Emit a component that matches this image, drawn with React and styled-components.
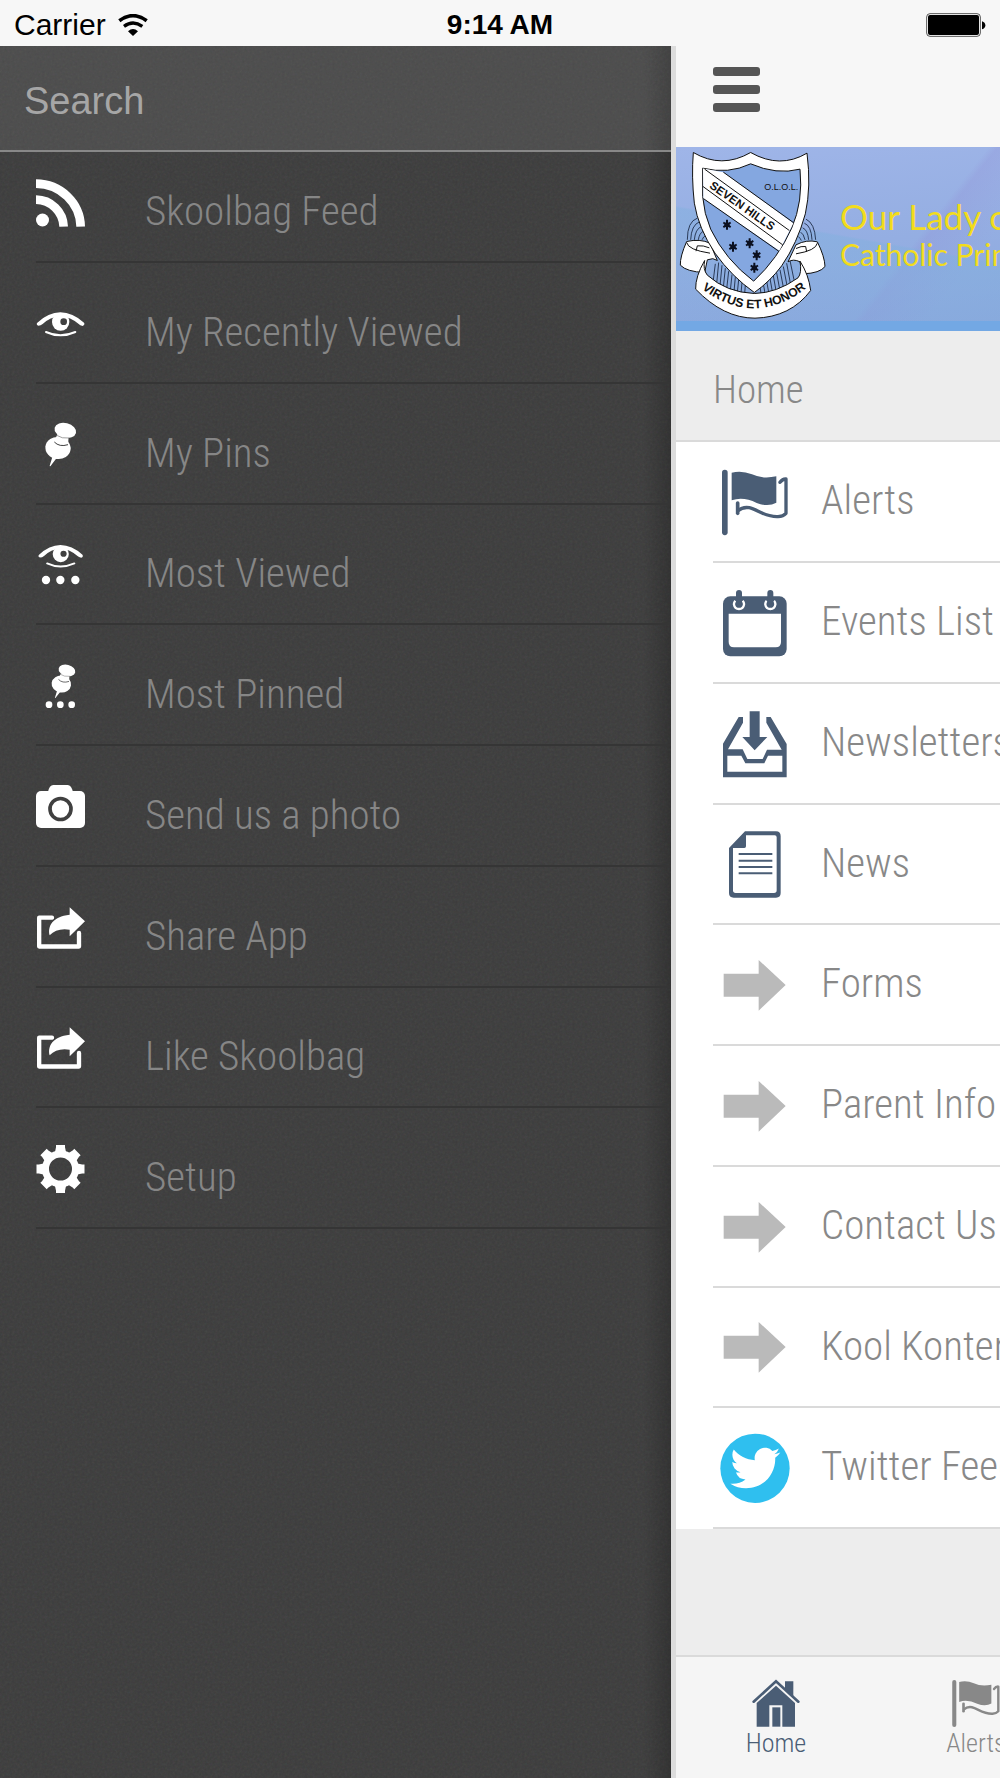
import React from 'react';
import styled, { createGlobalStyle } from 'styled-components';

const NAVY = '#4a5d75';
const GREY = '#888888';
const DARK = '#404040';

/* ---------- icons ---------- */

const menuBox = (y) => `108 ${y} 147 147`;
const tileBox = (y) => `219 ${y} 252 216`;

const RssIcon = () => (
    <MenuSvg viewBox={menuBox(536)}>
        <circle cx="127.500" cy="662" r="19.500" />
        <path d="M108 601A84 84 0 0 1 191 682M108 553A135 131 0 0 1 242 682" fill="none" stroke="#fff" strokeWidth="26" />
    </MenuSvg>
)

const EyeShape = () => (
    <g>
        <path d="M112 127Q145 97 181 96Q218 97 252 127Q256 134 248 137Q240 135 236 131Q212 110 181 107Q150 110 128 131Q122 136 115 136Q107 133 112 127Z" />
        <circle cx="182" cy="125" r="26" />
        <circle cx="191" cy="124" r="10" fill={DARK} />
        <path d="M138 155Q181 175 226 155" fill="none" stroke="#fff" strokeWidth="6" strokeLinecap="round" />
    </g>
)

const PinShape = () => (
    <g>
        <ellipse cx="174" cy="504" rx="38" ry="33" transform="rotate(8 174 504)" />
        <path d="M172 462L163 486Q178 502 204 494L206 470Z" />
        <path d="M158 528L149 557Q150 561 154 555L170 534Z" />
        <path d="M163 486Q178 502 204 494" fill="none" stroke={DARK} strokeWidth="3" />
        <ellipse cx="196" cy="451" rx="33" ry="22" transform="rotate(14 196 451)" />
        <path d="M168 465Q186 477 208 474" fill="none" stroke={DARK} strokeWidth="1.500" />
    </g>
)

const EyeIcon = () => (
    <MenuSvg viewBox={menuBox(56)}><EyeShape /></MenuSvg>
)

const PinIcon = () => (
    <MenuSvg viewBox={menuBox(420)}><PinShape /></MenuSvg>
)

const MostViewedIcon = () => (
    <MenuSvg viewBox={menuBox(782)}>
        <g transform="translate(13 708) scale(0.93)"><EyeShape /></g>
        <circle cx="138" cy="902" r="12.500" />
        <circle cx="181" cy="902" r="12.500" />
        <circle cx="226" cy="902" r="12.500" />
    </MenuSvg>
)

const MostPinnedIcon = () => (
    <MenuSvg viewBox={menuBox(183)}>
        <g transform="translate(50 -136) scale(0.77)"><PinShape /></g>
        <circle cx="147" cy="314" r="10" />
        <circle cx="181" cy="314" r="10" />
        <circle cx="215" cy="314" r="10" />
    </MenuSvg>
)

const CameraIcon = () => (
    <MenuSvg viewBox={menuBox(546)}>
        <rect x="108" y="573" width="147" height="111" rx="15" />
        <path d="M144 576Q148 555 160 555H203Q214 555 219 576Z" />
        <circle cx="181.500" cy="627" r="31.500" fill="none" stroke={DARK} strokeWidth="11" />
    </MenuSvg>
)

const ShareIcon = () => (
    <MenuSvg viewBox={menuBox(8)}>
        <path d="M156 52H117.500V138.500H237V98" fill="none" stroke="#fff" strokeWidth="13" strokeLinecap="round" strokeLinejoin="round" />
        <path d="M209 21L255 63L209 108V88Q170 82 149 105C142 78 158 48 209 43Z" stroke={DARK} strokeWidth="8" paintOrder="stroke" />
    </MenuSvg>
)

const GearIcon = () => (
    <MenuSvg viewBox={menuBox(732)}>
        <circle cx="181.500" cy="807" r="45" fill="none" stroke="#fff" strokeWidth="21" />
        {[0, 45, 90, 135, 180, 225, 270, 315].map((deg) => (
            <path key={deg} d="M168 735H195V742L198 756H165L168 742Z" transform={`rotate(${deg} 181.500 807)`} />
        ))}
    </MenuSvg>
)

const FlagShape = () => (
    <g>
        <path d="M254.500 458V637" fill="none" stroke="currentColor" strokeWidth="17" strokeLinecap="round" />
        <path d="M275 458Q305 450 336 463Q368 478 409 469V548Q385 562 350 549Q310 529 275 541Z" />
        <path d="M293 549V580" fill="none" stroke="currentColor" strokeWidth="11" strokeLinecap="round" />
        <path d="M295 572Q307 560 328 563C352 568 375 592 414 590Q430 589 438 580V477Q428 476 420 487" fill="none" stroke="currentColor" strokeWidth="10" strokeLinecap="round" strokeLinejoin="round" />
    </g>
)

const FlagIcon = () => (
    <TileSvg viewBox={tileBox(438)}><FlagShape /></TileSvg>
)

const CalendarIcon = () => (
    <TileSvg viewBox={tileBox(801)}>
        <rect x="249" y="829" width="191" height="180" rx="22" />
        <path d="M266 881H423V966Q423 982 407 982H282Q266 982 266 966Z" fill="#fff" />
        <path d="M286 842Q281 848 282 854Q284 867 297 867Q310 867 312 854Q313 848 308 842M380 842Q375 848 376 854Q378 867 391 867Q404 867 406 854Q407 848 402 842" fill="none" stroke="#fff" strokeWidth="7" />
        <path d="M297 819V851M391 819V851" fill="none" stroke="currentColor" strokeWidth="18" strokeLinecap="round" />
    </TileSvg>
)

const InboxIcon = () => (
    <TileSvg viewBox={tileBox(83)}>
        <path fillRule="evenodd" d="M296 110H309V127L264 207H308L322 236H368L381 208H425L379 127V110H392L440 191V291H249V190ZM262 226V274H427V226H384L373 249H316L304 226Z" />
        <path d="M329 93H359V170H382L344 210L307 170H329Z" />
    </TileSvg>
)

const PageIcon = () => (
    <TileSvg viewBox={tileBox(445)}>
        <path fillRule="evenodd" d="M315 455H408Q422 455 422 469V640Q422 654 408 654H281Q267 654 267 640V505ZM318 467V500Q318 505 313 505H279V632Q279 640 287 640H402Q410 640 410 632V473Q410 467 404 467Z" />
        <path d="M296 523H397M296 543H397M296 562H397M296 581H397" fill="none" stroke="currentColor" strokeWidth="6" />
    </TileSvg>
)

const ArrowIcon = () => (
    <TileSvg viewBox={tileBox(808)}>
        <path fill="#bababa" d="M251 882H356V841L437 916L356 993V951H251Z" />
    </TileSvg>
)

const TwitterIcon = () => (
    <TileSvg viewBox={tileBox(457)}>
        <circle cx="345" cy="566" r="104" fill="#2fbfef" />
        <path fill="#fff" transform="translate(271 490) scale(6.250)" d="M23.953 4.570a10 10 0 01-2.825.775 4.958 4.958 0 002.163-2.723c-.951.555-2.005.959-3.127 1.184a4.920 4.920 0 00-8.384 4.482C7.690 8.095 4.067 6.130 1.640 3.162a4.822 4.822 0 00-.666 2.475c0 1.710.870 3.213 2.188 4.096a4.904 4.904 0 01-2.228-.616v.060a4.923 4.923 0 003.946 4.827 4.996 4.996 0 01-2.212.085 4.936 4.936 0 004.604 3.417 9.867 9.867 0 01-6.102 2.105c-.390 0-.779-.023-1.170-.067a13.995 13.995 0 007.557 2.209c9.053 0 13.998-7.496 13.998-13.985 0-.210 0-.420-.015-.630A9.935 9.935 0 0024 4.590z" />
    </TileSvg>
)

const HomeTabIcon = () => (
    <TabSvg viewBox="341 177 144 147">
        <path d="M440 184H465V229L440 208Z" />
        <path d="M346 245L413 184L480 245" fill="none" stroke="currentColor" strokeWidth="8" strokeLinecap="round" />
        <path d="M413 197L470 249V320H432V256H393V320H355V249Z" />
        <path d="M402 262H426V320H402Z" />
    </TabSvg>
)

const FlagTabIcon = () => (
    <TabSvg viewBox="245 449 200 197"><FlagShape /></TabSvg>
)

const WifiIcon = () => (
    <WifiSvg viewBox="355 38 90 66">
        <path d="M359 58Q400 28 441 58" fill="none" stroke="#000" strokeWidth="11" />
        <path d="M373 75Q400 55 428 75" fill="none" stroke="#000" strokeWidth="10" />
        <path d="M385 90Q400 76 415 90L400 104Z" />
    </WifiSvg>
)

const BatteryIcon = () => (
    <BatterySvg viewBox="1281 38 180 72">
        <rect x="1283" y="40" width="161" height="68" rx="10" fill="#fff" stroke="#333" strokeWidth="2.500" />
        <rect x="1287" y="44" width="153" height="60" rx="6" />
        <path d="M1449 63Q1459 66 1459 75Q1459 84 1449 87Z" />
    </BatterySvg>
)

const stars = [[201, 255], [219, 321], [269, 310], [290, 346], [283, 384]]

const Crest = () => (
    <CrestSvg viewBox="48 22 480 521">
        {/* pleats behind the shield */}
        <g fill="none" stroke="#16233c" strokeWidth="2.500">
            <path d="M82 300Q82 245 112 235M92 300Q94 256 118 246M103 300Q106 268 124 260M115 300Q118 280 130 274M126 300Q130 290 138 286" />
            <path d="M467 300Q464 250 438 238M456 300Q454 258 433 250M446 300Q443 270 428 264M435 300Q431 282 422 277M424 302Q420 294 415 290" />
            <path d="M166 372L160 420M176 368L170 432M186 376L180 438M196 385L190 443M206 394L200 448M216 404L211 452M226 412L222 455M236 420L232 458M246 428L243 460M256 436L254 461" />
            <path d="M390 362L402 420M380 370L391 430M370 380L381 437M360 390L370 442M350 399L359 448M340 408L348 452M330 416L337 455M320 424L326 457M310 432L315 460M300 440L303 461" />
        </g>
        {/* side scrolls */}
        <g fill="#fff" stroke="#111" strokeWidth="3">
            <path d="M80 305Q60 350 61 376Q80 396 134 398L142 360Q160 352 172 362L150 310Q120 296 80 305Z" />
            <path d="M80 308Q84 330 150 340M108 334L112 318Q130 316 148 324" fill="none" />
            <path d="M472 306Q494 350 495 380Q480 400 430 402L420 366Q400 356 384 366L408 315Q440 298 472 306Z" />
            <path d="M472 310Q468 332 408 342M440 336L437 320Q424 318 408 326" fill="none" />
            <path d="M134 362Q106 410 107 448Q190 535 285 535Q392 532 452 452Q446 404 420 364Q426 400 414 414Q350 460 283 461Q200 458 142 406Q128 388 134 362Z" />
        </g>
        {/* shield */}
        <path d="M100 38Q185 88 272 38Q360 88 441 40Q454 140 436 222Q412 310 365 378Q330 425 283 458Q215 410 165 340Q115 265 103 190Q94 110 100 38Z" fill="#fff" stroke="#111" strokeWidth="3" />
        <path d="M128 85Q205 104 272 72Q350 106 420 88Q430 185 395 265Q355 355 281 424Q196 360 152 268Q132 222 128 170Z" fill="#84a7e0" stroke="#111" strokeWidth="3" />
        <path d="M129 86L190 97L400 250L358 333L130 176Z" fill="#fff" />
        <path d="M190 97L400 248M134 88L388 272M129 140L368 315M130 176L356 334" fill="none" stroke="#111" strokeWidth="3" />
        <g fill="#0b1020" stroke="#0b1020" strokeWidth="6">
            {stars.map(([x, y]) => (
                <g key={x}>
                    <circle cx={x} cy={y} r="5" />
                    <path d={`M${x} ${y - 15}V${y + 15}M${x - 11} ${y - 7}L${x + 11} ${y + 7}M${x - 11} ${y + 7}L${x + 11} ${y - 7}`} />
                </g>
            ))}
        </g>
        <CrestText fontSize="27" x="313" y="152">O.L.O.L.</CrestText>
        <CrestText fontSize="35" $bold transform="translate(146 142) rotate(35)">SEVEN HILLS</CrestText>
        <path id="motto-curve" d="M116 440Q284 572 448 438" fill="none" />
        <CrestText fontSize="37" $bold textAnchor="middle">
            <textPath href="#motto-curve" startOffset="50%">VIRTUS ET HONOR</textPath>
        </CrestText>
    </CrestSvg>
)

/* ---------- data ---------- */

const menuItems = [
    { label: 'Skoolbag Feed', Icon: RssIcon },
    { label: 'My Recently Viewed', Icon: EyeIcon },
    { label: 'My Pins', Icon: PinIcon },
    { label: 'Most Viewed', Icon: MostViewedIcon },
    { label: 'Most Pinned', Icon: MostPinnedIcon },
    { label: 'Send us a photo', Icon: CameraIcon },
    { label: 'Share App', Icon: ShareIcon },
    { label: 'Like Skoolbag', Icon: ShareIcon },
    { label: 'Setup', Icon: GearIcon },
]

const homeItems = [
    { label: 'Alerts', Icon: FlagIcon },
    { label: 'Events List', Icon: CalendarIcon },
    { label: 'Newsletters', Icon: InboxIcon },
    { label: 'News', Icon: PageIcon },
    { label: 'Forms', Icon: ArrowIcon },
    { label: 'Parent Info', Icon: ArrowIcon },
    { label: 'Contact Us', Icon: ArrowIcon },
    { label: 'Kool Kontent', Icon: ArrowIcon },
    { label: 'Twitter Feed', Icon: TwitterIcon },
]

/* ---------- page ---------- */

function Drawer() {
    return (
        <DrawerPanel>
            <SearchBar>
                <SearchInput type="search" placeholder="Search" aria-label="Search" />
            </SearchBar>
            <MenuList>
                {menuItems.map(({ label, Icon }) => (
                    <MenuItem key={label}>
                        <MenuLink href="#">
                            <Icon />
                            <MenuLabel>{label}</MenuLabel>
                        </MenuLink>
                    </MenuItem>
                ))}
            </MenuList>
        </DrawerPanel>
    )
}

function Content() {
    return (
        <ContentPanel>
            <Toolbar>
                <MenuButton aria-label="Menu">
                    <Bar /><Bar /><Bar />
                </MenuButton>
            </Toolbar>
            <Banner>
                <Crest />
                <SchoolName>
                    <SchoolLine $size={35}>Our Lady of Lourdes</SchoolLine>
                    <SchoolLine $size={30}>Catholic Primary School</SchoolLine>
                </SchoolName>
            </Banner>
            <SectionTitle>Home</SectionTitle>
            <HomeList>
                {homeItems.map(({ label, Icon }) => (
                    <HomeItem key={label}>
                        <HomeLink href="#">
                            <Icon />
                            <HomeLabel>{label}</HomeLabel>
                        </HomeLink>
                    </HomeItem>
                ))}
            </HomeList>
            <TabBar>
                <Tab $active><HomeTabIcon />Home</Tab>
                <Tab><FlagTabIcon />Alerts</Tab>
            </TabBar>
        </ContentPanel>
    )
}

export default function App() {
    return (
        <Page>
            <GlobalStyle />
            <StatusBar>
                <Carrier>Carrier <WifiIcon /></Carrier>
                <Clock>9:14 AM</Clock>
                <BatteryIcon />
            </StatusBar>
            <Columns>
                <Drawer />
                <Content />
            </Columns>
        </Page>
    )
}

const GlobalStyle = createGlobalStyle`
    * {
        box-sizing: border-box;
    }
    body {
        margin: 0;
        background-color: #f7f7f7;
        font-family: 'Roboto Condensed', Roboto, sans-serif;
        font-weight: 300;
        overflow-x: hidden;
    }
    ul {
        list-style: none;
        margin: 0;
        padding: 0;
    }
    a {
        text-decoration: none;
    }
    button {
        border: 0;
        padding: 0;
        background: none;
        font: inherit;
    }
`

const Page = styled.div`
    min-height: 100vh;
    display: flex;
    flex-direction: column;
    overflow: hidden;
`

const StatusBar = styled.header`
    height: 46px;
    padding: 4px 14px 0;
    display: grid;
    grid-template-columns: 1fr auto 1fr;
    align-items: center;
    font-family: 'Liberation Sans', Arial, sans-serif;
    font-weight: 400;
    font-size: 30px;
    color: #000;
`

const Carrier = styled.span`
    display: flex;
    align-items: center;
    gap: 12px;
`

const Clock = styled.span`
    font-size: 28px;
    font-weight: 700;
`

const WifiSvg = styled.svg`
    width: 30px;
    height: 22px;
`

const BatterySvg = styled.svg`
    width: 60px;
    height: 24px;
    justify-self: end;
`

const Columns = styled.main`
    flex: 1;
    display: grid;
    grid-template-columns: minmax(0, 671fr) minmax(0, 329fr);
`

const noise = `url("data:image/svg+xml,%3Csvg xmlns='http://www.w3.org/2000/svg' width='240' height='240'%3E%3Cfilter id='n'%3E%3CfeTurbulence type='fractalNoise' baseFrequency='0.4' numOctaves='2' stitchTiles='stitch'/%3E%3C/filter%3E%3Crect width='240' height='240' filter='url(%23n)' opacity='0.08'/%3E%3C/svg%3E")`

const DrawerPanel = styled.nav`
    background-color: #3b3b3b;
    background-image: linear-gradient(to left, rgba(0, 0, 0, 0.2), rgba(0, 0, 0, 0) 28px), ${noise};
`

const SearchBar = styled.div`
    height: 106px;
    border-bottom: 2px solid #888888;
    background-color: rgba(255, 255, 255, 0.08);
`

const SearchInput = styled.input`
    width: 100%;
    height: 100%;
    padding: 6px 24px 0;
    border: 0;
    outline: 0;
    background: transparent;
    appearance: none;
    font-family: 'Liberation Sans', Arial, sans-serif;
    font-size: 38px;
    color: #ffffff;

    &::placeholder {
        color: #a6a6a6;
        opacity: 1;
    }
`

const MenuList = styled.ul`
    padding-left: 36px;
`

const MenuLink = styled.a`
    height: 121px;
    padding-bottom: 34px;
    border-bottom: 2px solid #353535;
    display: flex;
    align-items: flex-end;
    gap: 60px;
    color: #868686;
`

const MenuItem = styled.li`
    &:first-child ${MenuLink} {
        height: 111px;
    }

    &:nth-child(4n) ${MenuLink} {
        height: 120px;
    }
`

const MenuSvg = styled.svg`
    width: 49px;
    height: 49px;
    fill: #ffffff;
`

const MenuLabel = styled.span`
    font-size: 41px;
    line-height: 32px;
    white-space: nowrap;
`

const ContentPanel = styled.section`
    display: flex;
    flex-direction: column;
    border-left: 5px solid #dcdcdc;
    background-color: #ededed;
    overflow: hidden;
`

const Toolbar = styled.div`
    height: 101px;
    padding: 21px 37px;
    background-color: #f7f7f7;
`

const MenuButton = styled.button`
    display: flex;
    flex-direction: column;
    gap: 9px;
`

const Bar = styled.span`
    width: 47px;
    height: 9px;
    border-radius: 3px;
    background-color: #555555;
`

const Banner = styled.div`
    height: 184px;
    border-bottom: 10px solid #73a8e4;
    display: flex;
    gap: 4px;
    background-image:
        linear-gradient(190deg, rgba(140, 180, 224, 0) 50%, rgba(130, 176, 222, 0.5) 51%, rgba(130, 170, 220, 0.2)),
        linear-gradient(128deg, rgba(150, 150, 220, 0) 68%, rgba(146, 146, 216, 0.3) 70%, rgba(150, 160, 220, 0) 84%),
        linear-gradient(175deg, #9fb5e8, #8ba8dd);
`

const CrestSvg = styled.svg`
    width: 160px;
    height: 174px;
    flex: none;
`

const CrestText = styled.text`
    font-family: 'Liberation Sans', Arial, sans-serif;
    font-weight: ${({ $bold }) => ($bold ? 700 : 400)};
    fill: #111111;
`

const SchoolName = styled.div`
    padding-top: 50px;
`

const SchoolLine = styled.div`
    font-family: Lato, sans-serif;
    font-weight: 400;
    font-size: ${({ $size }) => $size}px;
    line-height: 38px;
    white-space: nowrap;
    color: #f2dc1c;
`

const SectionTitle = styled.h1`
    height: 111px;
    margin: 0;
    padding: 9px 37px 0;
    border-bottom: 2px solid #dadada;
    font-size: 39px;
    font-weight: 300;
    line-height: 101px;
    color: ${GREY};
`

const HomeList = styled.ul`
    padding-left: 37px;
    background-color: #ffffff;
`

const HomeLink = styled.a`
    height: 121px;
    border-bottom: 2px solid #dadada;
    display: flex;
    align-items: center;
    gap: 24px;
    color: ${NAVY};
`

const HomeItem = styled.li`
    &:nth-child(4n) ${HomeLink} {
        height: 120px;
    }
`

const TileSvg = styled.svg`
    width: 84px;
    height: 72px;
    flex: none;
    fill: currentColor;
`

const HomeLabel = styled.span`
    padding-bottom: 3px;
    font-size: 41px;
    line-height: 48px;
    white-space: nowrap;
    color: ${GREY};
`

const TabBar = styled.div`
    height: 123px;
    margin-top: auto;
    border-top: 2px solid #dadada;
    display: flex;
    background-color: #f5f5f5;
`

const Tab = styled.button`
    flex: 0 0 200px;
    padding-top: 22px;
    display: flex;
    flex-direction: column;
    align-items: center;
    font-size: 26px;
    line-height: 30px;
    color: ${({ $active }) => ($active ? NAVY : GREY)};
`

const TabSvg = styled.svg`
    width: 48px;
    height: 49px;
    flex: none;
    fill: currentColor;
`
